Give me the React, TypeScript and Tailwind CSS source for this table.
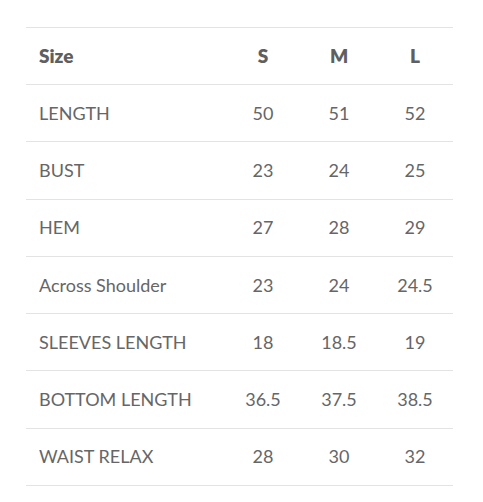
import React from 'react';

const rows: [string, string, string, string][] = [
  ['LENGTH', '50', '51', '52'],
  ['BUST', '23', '24', '25'],
  ['HEM', '27', '28', '29'],
  ['Across Shoulder', '23', '24', '24.5'],
  ['SLEEVES LENGTH', '18', '18.5', '19'],
  ['BOTTOM LENGTH', '36.5', '37.5', '38.5'],
  ['WAIST RELAX', '28', '30', '32'],
];

export default function App() {
  return (
    <div className="w-[483px] h-[502px] bg-white pt-[27px] pl-[26px] font-['Lato',sans-serif] text-[#666666]">
      <table className="w-[427px] border-collapse border-t border-[#e3e3e3] table-fixed">
        <colgroup>
          <col className="w-[199px]" />
          <col className="w-[76px]" />
          <col className="w-[76px]" />
          <col className="w-[76px]" />
        </colgroup>
        <thead>
          <tr className="border-b border-[#e3e3e3]">
            <th className="h-[57px] pl-[13px] text-left text-[19px] font-extrabold text-[#5f5f5f]">Size</th>
            <th className="h-[57px] text-center text-[19px] font-extrabold text-[#5f5f5f]">S</th>
            <th className="h-[57px] text-center text-[19px] font-extrabold text-[#5f5f5f]">M</th>
            <th className="h-[57px] text-center text-[19px] font-extrabold text-[#5f5f5f]">L</th>
          </tr>
        </thead>
        <tbody>
          {rows.map((r) => (
            <tr key={r[0]} className="border-b border-[#e3e3e3]">
              <td className="h-[57.3px] pl-[13px] text-left text-[18px]">{r[0]}</td>
              <td className="h-[57.3px] text-center text-[18px]">{r[1]}</td>
              <td className="h-[57.3px] text-center text-[18px]">{r[2]}</td>
              <td className="h-[57.3px] text-center text-[18px]">{r[3]}</td>
            </tr>
          ))}
        </tbody>
      </table>
    </div>
  );
}
